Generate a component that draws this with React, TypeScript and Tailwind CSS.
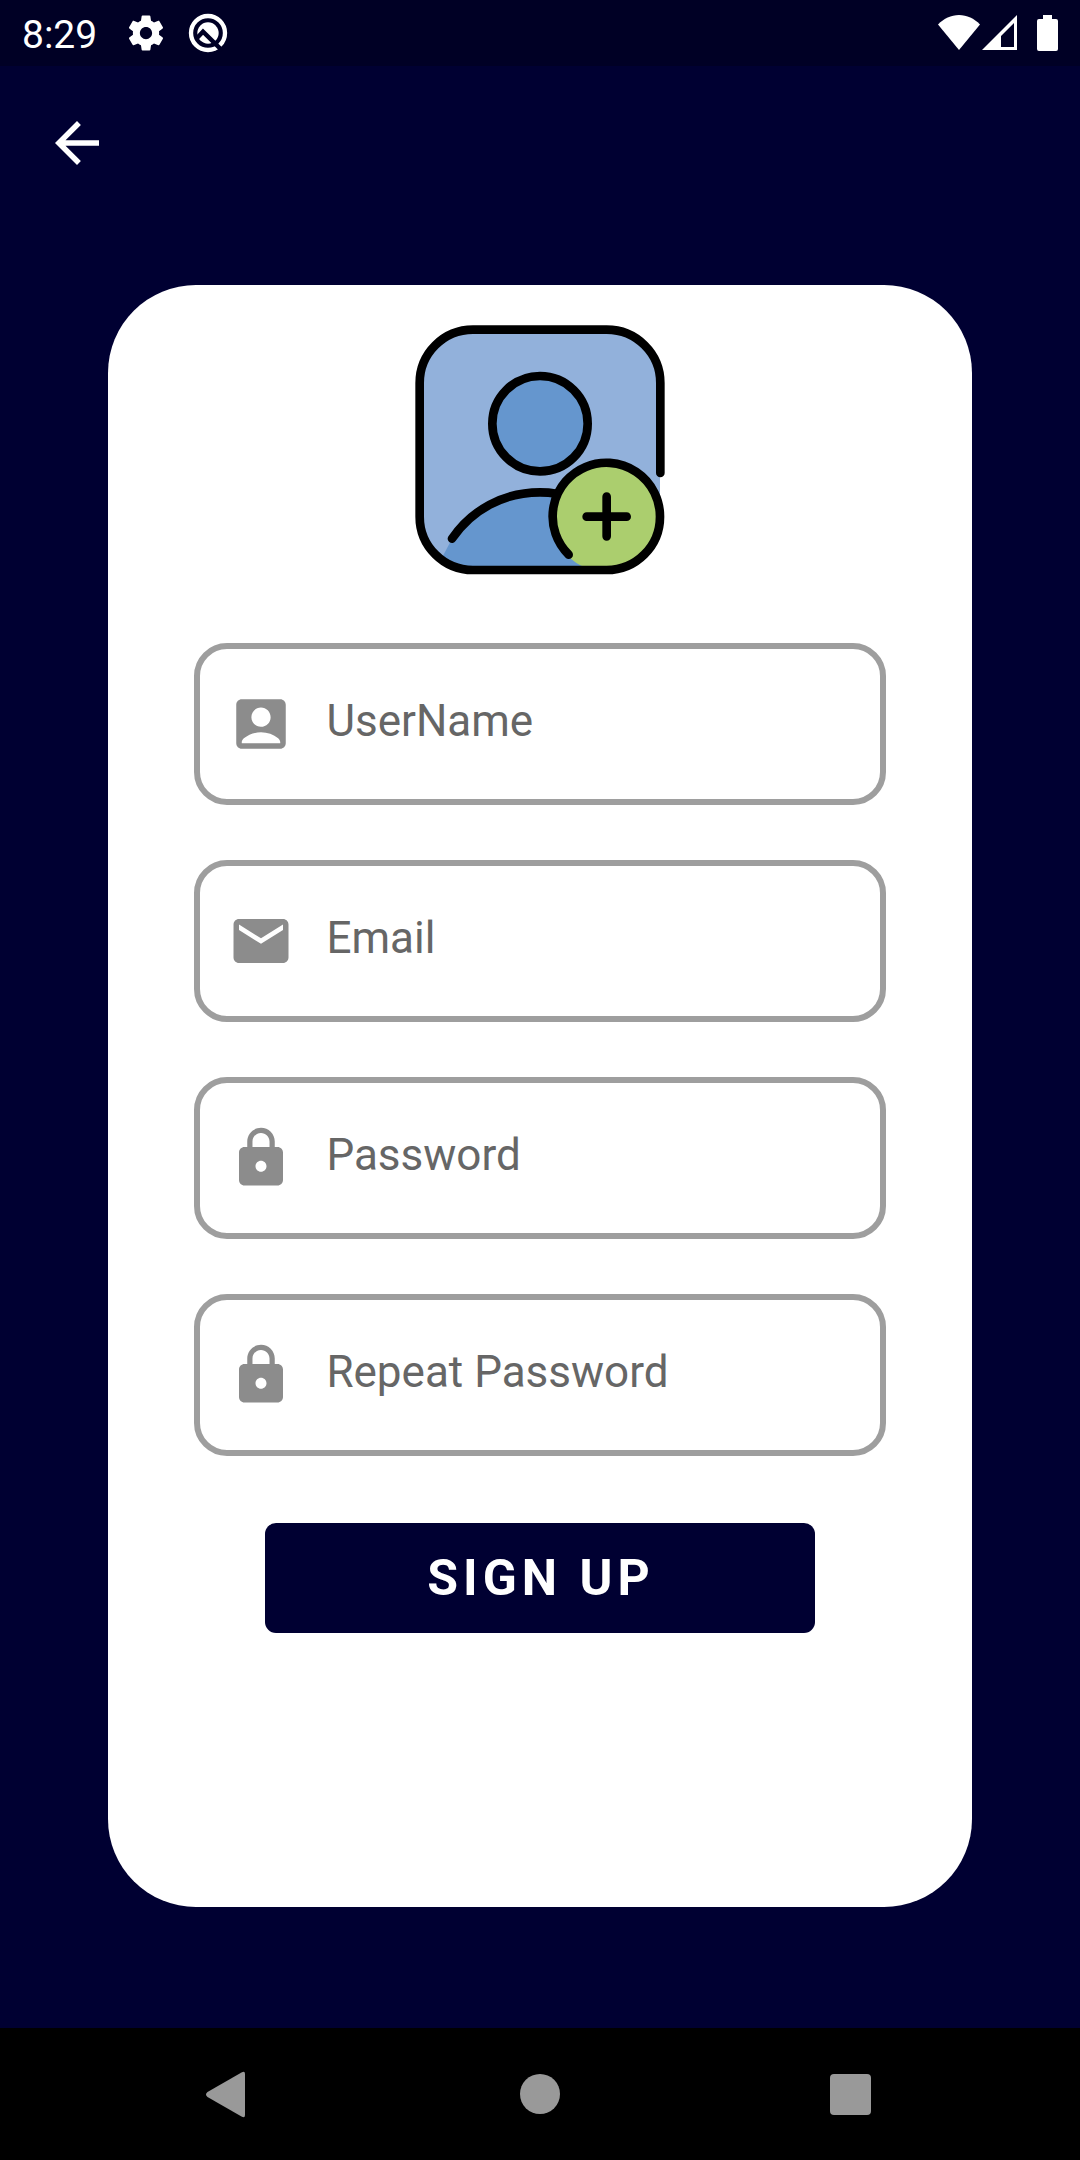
import React from "react";
import { MdAccountBox, MdArrowBack, MdEmail, MdLock } from "react-icons/md";
import type { IconType } from "react-icons";

function StatusBar() {
  return (
    <header className="flex h-[66px] items-center bg-[#000025] pl-[22px] pr-[22px] text-white">
      <time className="pt-1 text-[39px] leading-none">8:29</time>
      <svg className="ml-7 size-[42px]" viewBox="0 0 24 24" fill="currentColor" aria-label="Settings">
        <path d="M19.43 12.98c.04-.32.07-.64.07-.98s-.03-.66-.07-.98l2.11-1.65c.19-.15.24-.42.12-.64l-2-3.46c-.12-.22-.39-.3-.61-.22l-2.49 1c-.52-.4-1.08-.73-1.69-.98l-.38-2.65C14.46 2.18 14.25 2 14 2h-4c-.25 0-.46.18-.49.42l-.38 2.65c-.61.25-1.17.59-1.69.98l-2.49-1c-.23-.09-.49 0-.61.22l-2 3.46c-.13.22-.07.49.12.64l2.11 1.65c-.04.32-.07.65-.07.98s.03.66.07.98l-2.11 1.65c-.19.15-.24.42-.12.64l2 3.46c.12.22.39.3.61.22l2.49-1c.52.4 1.08.73 1.69.98l.38 2.65c.03.24.24.42.49.42h4c.25 0 .46-.18.49-.42l.38-2.65c.61-.25 1.17-.59 1.69-.98l2.49 1c.23.09.49 0 .61-.22l2-3.46c.12-.22.07-.49-.12-.64l-2.11-1.65zM12 15.5c-1.93 0-3.5-1.57-3.5-3.5s1.57-3.5 3.5-3.5 3.5 1.57 3.5 3.5-1.57 3.5-3.5 3.5z" />
      </svg>
      <svg className="ml-5 size-[42px]" viewBox="-63 -63 126 126" fill="none" aria-label="Notification">
        <circle r="51" stroke="#fff" strokeWidth="13" />
        <circle r="32" fill="#fff" />
        <path d="M-35 17L-15 -4L42 52" stroke="#000025" strokeWidth="13" />
      </svg>
      <div className="ml-auto flex items-center">
        <svg className="h-9 w-[42px]" viewBox="0 0 42 36" fill="currentColor" aria-label="Wi-Fi">
          <path d="M0 9.500C6 3.500 13 0 21 0s15 3.500 21 9.500L21 35z" />
        </svg>
        <svg className="ml-0.5 h-9 w-[35px]" viewBox="0 0 35 36" fill="currentColor" aria-label="Signal">
          <path fillRule="evenodd" d="M35 0V35H0zM32 8L19 21V32H32z" />
        </svg>
        <svg className="ml-5 h-9 w-[21px]" viewBox="0 0 21 36" fill="currentColor" aria-label="Battery">
          <path d="M6 0h9v4h4q2 0 2 2v28q0 2-2 2H2q-2 0-2-2V6q0-2 2-2h4z" />
        </svg>
      </div>
    </header>
  );
}

function AddUserLogo() {
  return (
    <svg className="size-[250px]" viewBox="45 45 750 750" fill="none" role="img" aria-label="Add user">
      <defs>
        <clipPath id="tile">
          <rect x="59" y="59" width="721" height="721" rx="160" />
        </clipPath>
      </defs>
      <g clipPath="url(#tile)">
        <rect x="59" y="59" width="721" height="721" fill="#92b1db" />
        <path d="M100 790Q128 740 156 686C215 600 310 547 420 547C560 547 660 620 720 790Z" fill="#6596ce" />
        <circle cx="620" cy="620" r="166" fill="#abce6e" />
      </g>
      <g stroke="#000" strokeWidth="26" strokeLinecap="round">
        <circle cx="420" cy="341" r="143" fill="#6596ce" />
        <path d="M156 686C215 600 310 547 420 547Q446 547 470 551" />
        <path d="M506 734A161 161 0 1 1 780 620A160 160 0 0 1 620 780H219A160 160 0 0 1 59 620V219A160 160 0 0 1 219 59H620A161 160 0 0 1 781 219V489" />
        <path d="M620 560V679M560 620H680" />
      </g>
    </svg>
  );
}

type FieldProps = { id: string; label: string; type: string; icon: IconType };

function Field({ id, label, type, icon: Icon }: FieldProps) {
  return (
    <label
      htmlFor={id}
      className="flex h-[162px] items-center rounded-[33px] border-[6px] border-[#9e9e9e] pl-7 pr-8"
    >
      <Icon className="size-[66px] shrink-0 text-[#8c8c8c]" aria-hidden="true" />
      <input
        id={id}
        type={type}
        placeholder={label}
        aria-label={label}
        className="ml-8 h-full min-w-0 flex-1 bg-transparent pb-1.5 text-[44px] text-[#666666] outline-none placeholder:text-[#666666]"
      />
    </label>
  );
}

const fields: FieldProps[] = [
  { id: "username", label: "UserName", type: "text", icon: MdAccountBox },
  { id: "email", label: "Email", type: "email", icon: MdEmail },
  { id: "password", label: "Password", type: "password", icon: MdLock },
  { id: "repeat-password", label: "Repeat Password", type: "password", icon: MdLock },
];

function NavigationBar() {
  return (
    <nav className="flex h-[132px] items-center justify-between bg-black px-[184px] text-[#999999]">
      <button type="button" aria-label="Back">
        <svg className="size-[84px]" viewBox="0 0 84 84" fill="currentColor">
          <path d="M57.500 20.500Q61 18.500 61 22V63Q61 66.500 57.500 64.500L23.500 45Q20.500 42.500 23.500 40Z" />
        </svg>
      </button>
      <button type="button" aria-label="Home">
        <svg className="size-[84px]" viewBox="0 0 84 84" fill="currentColor">
          <circle cx="42" cy="42" r="20" />
        </svg>
      </button>
      <button type="button" aria-label="Recent apps">
        <svg className="size-[84px]" viewBox="0 0 84 84" fill="currentColor">
          <rect x="18" y="22" width="41" height="41" rx="4" />
        </svg>
      </button>
    </nav>
  );
}

export default function App() {
  return (
    <div className="flex min-h-screen flex-col bg-[#000032] font-['Roboto',sans-serif]">
      <StatusBar />
      <div className="flex h-[154px] items-center px-11">
        <button type="button" aria-label="Go back" className="text-white">
          <MdArrowBack className="size-[66px]" />
        </button>
      </div>
      <main className="mx-auto mt-[65px] mb-[121px] flex w-4/5 flex-1 flex-col items-center rounded-[88px] bg-white pt-10 pb-16">
        <AddUserLogo />
        <form className="mt-[68px] flex w-4/5 flex-col gap-[55px]" onSubmit={(e) => e.preventDefault()}>
          {fields.map((field) => (
            <Field key={field.id} {...field} />
          ))}
          <button
            type="submit"
            className="mx-auto mt-3 h-[110px] w-[550px] max-w-full rounded-[11px] bg-[#000032] pl-0.5 text-[50px] font-bold tracking-[5px] text-white"
          >
            SIGN UP
          </button>
        </form>
      </main>
      <NavigationBar />
    </div>
  );
}
